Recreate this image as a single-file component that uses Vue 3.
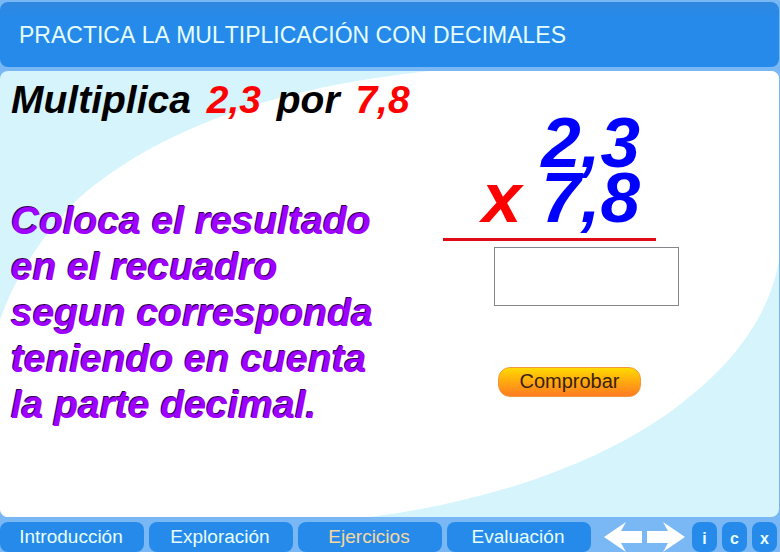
<script setup>
import { ref } from 'vue'

const factors = ['2,3', '7,8']
const answer = ref('')
const sections = ['Introducción', 'Exploración', 'Ejercicios', 'Evaluación']
const current = ref('Ejercicios')
const tools = [
  { key: 'i', label: 'Información' },
  { key: 'c', label: 'Créditos' },
  { key: 'x', label: 'Cerrar' },
]
</script>

<template>
  <div class="page">
    <header class="header">
      <h1>PRACTICA LA MULTIPLICACIÓN CON DECIMALES</h1>
    </header>

    <main class="panel">
      <svg class="backdrop" viewBox="0 0 780 446" preserveAspectRatio="none" aria-hidden="true">
        <path
          d="M0 249C15 205 45 160 80 126C140 75 240 20 430 0H780V190C770 245 735 290 690 326C620 385 500 430 370 446H0Z"
          fill="#fff"
        />
      </svg>

      <section class="statement">
        <h2>
          Multiplica <span class="factor">{{ factors[0] }}</span> por
          <span class="factor">{{ factors[1] }}</span>
        </h2>
        <p class="hint">
          Coloca el resultado<br />en el recuadro<br />segun corresponda<br />teniendo en cuenta<br />la parte decimal.
        </p>
      </section>

      <form class="exercise" @submit.prevent>
        <div class="operation">
          <div>{{ factors[0] }}</div>
          <div><span class="times">x</span> {{ factors[1] }}</div>
        </div>
        <input v-model="answer" class="answer" type="text" aria-label="Resultado" autocomplete="off" />
        <button class="check" type="submit">Comprobar</button>
      </form>
    </main>

    <nav class="nav">
      <div class="tabs">
        <button
          v-for="name in sections"
          :key="name"
          type="button"
          class="tab"
          :class="{ active: name === current }"
          @click="current = name"
        >{{ name }}</button>
      </div>
      <div class="arrows">
        <button type="button" class="arrow" aria-label="Anterior">
          <svg viewBox="0 0 38 30"><path d="M0 15L22 0L17 9H38V21H17L22 30Z" fill="#fff" /></svg>
        </button>
        <button type="button" class="arrow" aria-label="Siguiente">
          <svg viewBox="0 0 38 30"><path d="M38 15L16 0L21 9H0V21H21L16 30Z" fill="#fff" /></svg>
        </button>
      </div>
      <div class="tools">
        <button v-for="t in tools" :key="t.key" type="button" class="tool" :aria-label="t.label">{{ t.key }}</button>
      </div>
    </nav>
  </div>
</template>

<style>
body {
  margin: 0;
}
</style>

<style scoped>
* {
  box-sizing: border-box;
}
.page {
  min-height: 100vh;
  display: flex;
  flex-direction: column;
  padding-top: 2px;
  background: #7ab8f5;
  font-family: "Liberation Sans", Arial, sans-serif;
  font-kerning: none;
}
button {
  margin: 0;
  padding: 0;
  border: 0;
  font-family: inherit;
  cursor: pointer;
}
.header {
  margin-right: 1px;
  padding: 18px 19px 17px;
  border-radius: 8px;
  background: linear-gradient(#3088df, #268aea 16px);
}
h1 {
  margin: 0;
  font-size: 23px;
  line-height: 30px;
  font-weight: 400;
  color: #e6ffff;
}
.panel {
  position: relative;
  flex: 1;
  display: flex;
  justify-content: space-between;
  margin: 4px 1px 5px 0;
  padding: 6px 100px 0 11px;
  border-radius: 8px;
  overflow: hidden;
  background: #d5f4fc;
}
.backdrop {
  position: absolute;
  inset: 0;
  width: 100%;
  height: 100%;
}
.statement,
.exercise {
  position: relative;
}
h2,
.hint {
  margin: 0;
  font-size: 39px;
  line-height: 46px;
  font-weight: 700;
  font-style: italic;
  white-space: nowrap;
}
.factor {
  margin: 0 5px;
  color: #f00;
}
.hint {
  margin-top: 75px;
  color: #a000ff;
  text-shadow: -1px -1px 0 #30004c;
}
.exercise {
  width: 236px;
  padding-top: 38px;
}
.operation {
  width: 213px;
  padding: 0 16px 13px 0;
  border-bottom: 3px solid #e10a17;
  font-size: 71px;
  line-height: 55px;
  font-weight: 700;
  font-style: italic;
  text-align: right;
  white-space: nowrap;
  color: #00f;
}
.times {
  color: #f00;
}
.answer {
  display: block;
  width: 185px;
  height: 59px;
  margin: 6px 0 0 auto;
  padding: 0 8px;
  border: 1px solid #85858c;
  border-radius: 0;
  background: #fff;
  font: italic 700 39px "Liberation Sans", Arial, sans-serif;
}
.check {
  display: block;
  width: 143px;
  height: 30px;
  margin: 61px 0 0 55px;
  padding-bottom: 2px;
  border: 1px solid #ee9a3c;
  border-radius: 12px;
  background: linear-gradient(#ffd900, #ffa312 55%, #ff7c22);
  font-size: 20px;
  line-height: 26px;
  color: #3a2208;
}
.nav {
  display: flex;
  height: 30px;
  padding-right: 3px;
}
.tabs {
  flex: 1;
  display: grid;
  grid-template-columns: repeat(4, 1fr);
  gap: 5px;
}
.tab,
.tool {
  border-radius: 8px;
  background: #268aea;
  color: #e6ffff;
}
.tab {
  padding-right: 2px;
  font-size: 19px;
  line-height: 30px;
}
.tab.active {
  color: #f5d9a0;
}
.arrows {
  display: flex;
  gap: 5px;
  margin: 0 7px 0 13px;
}
.arrow {
  width: 38px;
  background: none;
}
.arrow svg {
  display: block;
  width: 38px;
  height: 30px;
}
.tools {
  display: flex;
  gap: 5px;
}
.tool {
  width: 25px;
  padding-top: 3px;
  font-size: 16px;
  font-weight: 700;
}
</style>
